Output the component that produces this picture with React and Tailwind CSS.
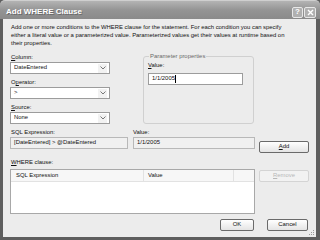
import React from "react";

const U = ({ children }) => <span className="underline">{children}</span>;

function Combo({ text }) {
  return (
    <div className="h-[12px] w-[100px] bg-white border border-[#9c9c9c] flex items-center justify-between pl-[3px] pr-[2px]">
      <span className="leading-none text-[#111]">{text}</span>
      <span className="w-[9px] h-[9px] bg-[#f2f2f2] flex items-center justify-center">
        <svg width="6" height="4" viewBox="0 0 6 4">
          <path d="M0.5 0.5 L3 3 L5.5 0.5" fill="none" stroke="#777" strokeWidth="1" />
        </svg>
      </span>
    </div>
  );
}

function Btn({ children, w, disabled }) {
  return (
    <div
      className={`h-[12px] ${w} rounded-[2px] border flex items-center justify-center leading-none ${
        disabled ? "border-[#d4d4d4] text-[#b8b8b8] bg-[#f2f2f2]" : "border-[#6a6a6a] text-[#111] bg-gradient-to-b from-[#ffffff] to-[#e4e4e4]"
      }`}
    >
      {children}
    </div>
  );
}

export default function App() {
  return (
    <div
      className="w-[320px] h-[240px] flex flex-col bg-[#5e5e5e] overflow-hidden"
      style={{ fontFamily: '"Liberation Sans", Arial, sans-serif' }}
    >
      {/* title bar */}
      <div className="h-[19px] shrink-0 flex items-center justify-between pl-[6px] pr-[4px] bg-gradient-to-b from-[#b4b4b4] via-[#949494] to-[#8a8a8a] rounded-t-[5px] border-t border-[#cfcfcf]">
        <span className="mt-[3px] text-[8px] font-bold text-white leading-none [text-shadow:1px_1px_0_#6a6a6a]">Add WHERE Clause</span>
        <div className="flex gap-[1px] mt-[4px]">
          <div className="w-[11px] h-[11px] rounded-[2px] border border-[#e8e8e8] bg-[#b0b0b0] flex items-center justify-center text-white text-[8px] font-bold leading-none">?</div>
          <div className="w-[12px] h-[11px] rounded-[2px] border border-[#e8e8e8] bg-[#b0b0b0] flex items-center justify-center">
            <svg width="7" height="7" viewBox="0 0 7 7">
              <path d="M1 1 L6 6 M6 1 L1 6" stroke="#fff" strokeWidth="1.4" />
            </svg>
          </div>
        </div>
      </div>
      {/* body */}
      <div className="flex-1 flex flex-col ml-[3px] mr-[4px] mb-[3px] bg-[#ececec] px-[7px] text-[#111] text-[5.9px] leading-[8px] relative">
        <div className="mt-[4px] pl-[1px]">
          <div>Add one or more conditions to the WHERE clause for the statement. For each condition you can specify</div>
          <div>either a literal value or a parameterized value. Parameterized values get their values at runtime based on</div>
          <div>their properties.</div>
        </div>

        <div className="flex mt-[6px]">
          <div className="flex flex-col w-[100px]">
            <div className="pl-[1px]"><U>C</U>olumn:</div>
            <div className="mt-[1px]"><Combo text="DateEntered" /></div>
            <div className="mt-[4px] pl-[1px]">O<U>p</U>erator:</div>
            <div className="mt-[1px]"><Combo text=">" /></div>
            <div className="mt-[4px] pl-[1px]"><U>S</U>ource:</div>
            <div className="mt-[1px]"><Combo text="None" /></div>
          </div>
          <fieldset className="ml-[33px] -mt-[1px] w-[111px] h-[72px] border border-[#d0d0d0] rounded-[3px] px-[4px]">
            <legend className="ml-[1px] px-[1px] text-[#6a6a6a]">Parameter properties</legend>
            <div className="mt-[1px]"><U>V</U>alue:</div>
            <div className="mt-[4px] w-[95px] h-[12px] bg-white border border-[#9c9c9c] flex items-center pl-[3px]">
              <span className="leading-none">1/1/2005</span>
              <span className="w-[1px] h-[8px] bg-black ml-[0.5px]" />
            </div>
          </fieldset>
        </div>

        <div className="flex mt-[4px] pl-[1px]">
          <div className="w-[122px]">SQL Expression:</div>
          <div>Value:</div>
        </div>
        <div className="flex items-start mt-[1px]">
          <div className="w-[118px] h-[12px] bg-[#f0f0f0] border border-[#b8b8b8] flex items-center pl-[3px] leading-none">[DateEntered] &gt; @DateEntered</div>
          <div className="ml-[5px] w-[122px] h-[12px] bg-[#f0f0f0] border border-[#b8b8b8] flex items-center pl-[3px] leading-none">1/1/2005</div>
          <div className="ml-[4px] mt-[4px]"><Btn w="w-[50px]"><U>A</U>dd</Btn></div>
        </div>

        <div className="mt-[5px] pl-[1px]"><U>W</U>HERE clause:</div>
        <div className="flex items-start mt-[3px]">
          <div className="w-[245px] h-[45px] bg-white border border-[#a8a8a8] flex flex-col">
            <div className="h-[12px] flex items-center bg-[#f7f7f7] border-b border-[#e2e2e2] leading-none">
              <div className="w-[133px] pl-[5px] h-full flex items-center border-r border-[#e2e2e2]">SQL Expression</div>
              <div className="w-[90px] pl-[4px] h-full flex items-center border-r border-[#e2e2e2]">Value</div>
            </div>
          </div>
          <div className="ml-[4px] mt-[1px]"><Btn w="w-[50px]" disabled><U>R</U>emove</Btn></div>
        </div>

        <div className="flex justify-end mt-[5px] pr-[1px] gap-[13px]">
          <Btn w="w-[34px]">OK</Btn>
          <Btn w="w-[41px]">Cancel</Btn>
        </div>
        <svg className="absolute right-[1px] bottom-[1px]" width="6" height="6" viewBox="0 0 6 6">
          <rect x="4" y="0" width="1" height="1" fill="#9a9a9a" />
          <rect x="2" y="2" width="1" height="1" fill="#9a9a9a" />
          <rect x="4" y="2" width="1" height="1" fill="#9a9a9a" />
          <rect x="0" y="4" width="1" height="1" fill="#9a9a9a" />
          <rect x="2" y="4" width="1" height="1" fill="#9a9a9a" />
          <rect x="4" y="4" width="1" height="1" fill="#9a9a9a" />
        </svg>
      </div>
    </div>
  );
}
